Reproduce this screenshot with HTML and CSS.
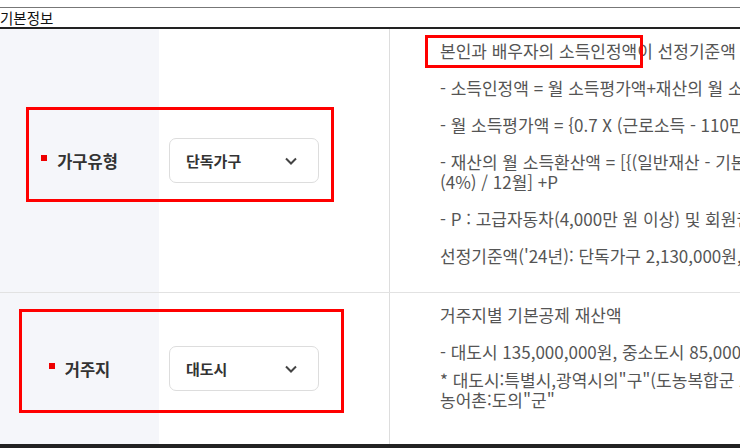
FILE: index.html
```html
<!DOCTYPE html>
<html lang="ko">
<head>
    <meta charset="UTF-8">
    <meta name="viewport" content="width=device-width, initial-scale=1.0">
    <title>기본정보</title>
    <link rel="stylesheet" href="styles.css">
</head>
<body>
    <div class="page">
        <h2 class="section-title">기본정보</h2>

        <div class="form-table">
            <!-- 가구유형 -->
            <div class="form-row row-household">
                <div class="form-label"><span class="req">가구유형</span></div>
                <div class="form-field">
                    <div class="select-box">
                        <span>단독가구</span>
                        <svg class="chevron" width="12" height="8" viewBox="0 0 12 8"><path d="M1 1.5l5 5 5-5" fill="none" stroke="#444" stroke-width="2"/></svg>
                    </div>
                </div>
                <div class="form-desc">
                    <p>본인과 배우자의 소득인정액이 선정기준액 이하인 경우 수급 가능</p>
                    <p>- 소득인정액 = 월 소득평가액+재산의 월 소득환산액</p>
                    <p>- 월 소득평가액 = {0.7 X (근로소득 - 110만 원)} + 기타소득</p>
                    <p>- 재산의 월 소득환산액 = [{(일반재산 - 기본재산액) + (금융재산 - 2,000만 원) - 부채} X 소득환산율<br>(4%) / 12월] +P</p>
                    <p>- P : 고급자동차(4,000만 원 이상) 및 회원권의 가액</p>
                    <p>선정기준액('24년): 단독가구 2,130,000원, 부부가구 3,408,000원</p>
                </div>
            </div>

            <!-- 거주지 -->
            <div class="form-row row-region">
                <div class="form-label"><span class="req">거주지</span></div>
                <div class="form-field">
                    <div class="select-box">
                        <span>대도시</span>
                        <svg class="chevron" width="12" height="8" viewBox="0 0 12 8"><path d="M1 1.5l5 5 5-5" fill="none" stroke="#444" stroke-width="2"/></svg>
                    </div>
                </div>
                <div class="form-desc">
                    <p>거주지별 기본공제 재산액</p>
                    <p class="tight">- 대도시 135,000,000원, 중소도시 85,000,000원, 농어촌 72,500,000원</p>
                    <p>* 대도시:특별시,광역시의"구"(도농복합군 포함), 중소도시:도의"시",<br>농어촌:도의"군"</p>
                </div>
            </div>
        </div>

        <!-- 검토 표시 -->
        <div class="mark mark-household"></div>
        <div class="mark mark-region"></div>
        <div class="mark mark-text"></div>
    </div>
</body>
</html>
```

FILE: styles.css
```css
body {
    margin: 0;
    overflow: hidden;
    background: #fff;
    font-family: "Noto Sans CJK KR", "Noto Sans", sans-serif;
    color: #333;
}

.page {
    position: relative;
    width: 1100px;
    padding-top: 7px;
}

.section-title {
    margin: 0;
    border-top: 1px solid #777;
    border-bottom: 2px solid #222;
    font-size: 14.5px;
    font-weight: 400;
    line-height: 19px;
    color: #111;
}

/* Form table */
.form-table {
    border-bottom: 4px solid #222;
}

.form-row {
    display: grid;
    grid-template-columns: 159px 230px 1fr;
    box-sizing: border-box;
    border-bottom: 1px solid #e2e2e2;
}

.form-row:last-child {
    border-bottom: 0;
}

.row-household { height: 264px; }
.row-region { height: 151px; }

.form-label {
    display: flex;
    align-items: center;
    justify-content: center;
    background: #f5f6fa;
    font-size: 16.5px;
    font-weight: 700;
    color: #333;
}

.req {
    display: flex;
    align-items: center;
    gap: 10px;
}

.req::before {
    content: "";
    width: 6px;
    height: 6px;
    margin-top: -5px;
    background: #e00;
}

.form-field {
    display: flex;
    align-items: center;
    padding-left: 10px;
}

.select-box {
    display: flex;
    align-items: center;
    justify-content: space-between;
    box-sizing: border-box;
    width: 150px;
    height: 45px;
    padding: 0 21px 0 16px;
    border: 1px solid #ddd;
    border-radius: 7px;
    background: #fff;
    font-size: 15px;
    font-weight: 700;
    color: #333;
}

.chevron {
    display: block;
}

.form-desc {
    border-left: 1px solid #ddd;
    padding: 12px 0 0 50px;
    font-size: 17px;
    line-height: 20px;
    color: #555;
}

.form-desc p {
    margin: 0 0 17px;
    white-space: nowrap;
}

.form-desc p.tight {
    margin-bottom: 8px;
}

/* Red review marks */
.mark {
    position: absolute;
    box-sizing: border-box;
    border: 3px solid #f00;
}

.mark-household { left: 26px; top: 107px; width: 308px; height: 95px; }
.mark-region { left: 19px; top: 309px; width: 325px; height: 104px; }
.mark-text { left: 425px; top: 35px; width: 218px; height: 33px; }
```
